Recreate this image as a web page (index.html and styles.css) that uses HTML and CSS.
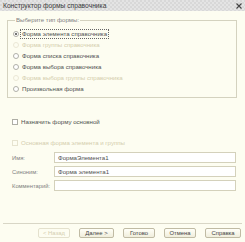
FILE: index.html
```html
<!DOCTYPE html>
<html lang="ru">
<head>
  <meta charset="UTF-8" />
  <title>Конструктор формы справочника</title>
  <link rel="stylesheet" href="styles.css">
</head>
<body>
  <div class="window">

    <div class="titlebar">
      <span class="title">Конструктор формы справочника</span>
      <svg class="close" width="6" height="6" viewBox="0 0 6 6">
        <path d="M0.5 0.5 L5.5 5.5 M5.5 0.5 L0.5 5.5" stroke="#444" stroke-width="1.1"/>
      </svg>
    </div>

    <div class="main">
      <fieldset class="group">
        <legend>Выберите тип формы:</legend>
        <label class="option"><span class="radio checked"></span><span class="text focus">Форма элемента справочника</span></label>
        <label class="option disabled"><span class="radio"></span><span class="text">Форма группы справочника</span></label>
        <label class="option"><span class="radio"></span><span class="text">Форма списка справочника</span></label>
        <label class="option"><span class="radio"></span><span class="text">Форма выбора справочника</span></label>
        <label class="option disabled"><span class="radio"></span><span class="text">Форма выбора группы справочника</span></label>
        <label class="option"><span class="radio"></span><span class="text">Произвольная форма</span></label>
      </fieldset>

      <label class="option check-main"><span class="box"></span><span class="text">Назначить форму основной</span></label>
      <label class="option check-group disabled"><span class="box"></span><span class="text">Основная форма элемента и группы</span></label>

      <div class="fields">
        <div class="field">
          <span class="field-label">Имя:</span>
          <div class="input">ФормаЭлемента1</div>
        </div>
        <div class="field">
          <span class="field-label">Синоним:</span>
          <div class="input">Форма элемента1</div>
        </div>
        <div class="field">
          <span class="field-label">Комментарий:</span>
          <div class="input"></div>
        </div>
      </div>
    </div>

    <div class="footer">
      <button class="btn w-back" disabled>&lt; Назад</button>
      <button class="btn w-next">Далее &gt;</button>
      <button class="btn w-done">Готово</button>
      <button class="btn w-cancel">Отмена</button>
      <button class="btn w-help">Справка</button>
    </div>

  </div>
</body>
</html>
```

FILE: styles.css
```css
/* Reset and base */
* { margin: 0; padding: 0; box-sizing: border-box; }
body {
  width: 245px;
  height: 242px;
  overflow: hidden;
  background: #fdfdf1;
  font-family: 'Liberation Sans', Arial, sans-serif;
  font-size: 6.1px;
  color: #505050;
}

.window {
  height: 242px;
  display: flex;
  flex-direction: column;
}

/* Title bar */
.titlebar {
  height: 11px;
  display: flex;
  align-items: center;
  justify-content: space-between;
  padding: 0 3px 0 3px;
  background-color: #d8d8d8;
  background-image:
    linear-gradient(45deg, #e4e4e4 25%, transparent 25%, transparent 75%, #e4e4e4 75%),
    linear-gradient(45deg, #e4e4e4 25%, transparent 25%, transparent 75%, #e4e4e4 75%);
  background-size: 4px 4px;
  background-position: 0 0, 2px 2px;
}
.title {
  font-size: 6.7px;
  color: #3a3a3a;
}

/* Main area */
.main {
  padding: 5px 8px 0 7px;
}

.group {
  border: 1px solid #d4d2bf;
  padding: 4px 0 3px 4px;
}
.group legend {
  line-height: 8px;
  margin-left: 3px;
  padding: 0 1px;
  color: #808080;
}

.option {
  display: flex;
  align-items: center;
  height: 11px;
  line-height: 11px;
  white-space: nowrap;
}
.option .text {
  line-height: 8px;
  padding: 0 1px;
  border: 1px solid transparent;
}
.option .text.focus {
  border: 1px dotted #666;
}
.option.disabled { color: #d4cdad; }

.radio {
  width: 6px;
  height: 6px;
  border: 1px solid #b0b0a8;
  border-radius: 50%;
  background: #fff;
  margin-right: 1px;
  margin-left: 1px;
  position: relative;
  flex-shrink: 0;
}
.radio.checked::after {
  content: "";
  position: absolute;
  width: 2px; height: 2px;
  top: 1px; left: 1px;
  border-radius: 50%;
  background: #444;
}
.option.disabled .radio {
  border-color: #ebe8d6;
  background: transparent;
}

.box {
  width: 6px;
  height: 6px;
  border: 1px solid #aeaea6;
  background: #fff;
  margin-left: 5px;
  margin-right: 1px;
  flex-shrink: 0;
}
.option.disabled .box {
  border-color: #e6e3cf;
  background: transparent;
}

.check-main { margin-top: 18px; }
.check-group { margin-top: 10px; }

/* Fields */
.fields {
  display: flex;
  flex-direction: column;
  gap: 3px;
  margin-top: 4px;
}
.field {
  display: flex;
  align-items: center;
  height: 11px;
}
.field-label {
  width: 47px;
  padding-left: 5px;
  font-size: 5.8px;
  color: #808080;
  white-space: nowrap;
}
.input {
  flex: 1;
  height: 11px;
  line-height: 9px;
  padding: 0 3px;
  background: #fff;
  border: 1px solid #d4d1bb;
  margin-right: 1px;
}

/* Footer */
.footer {
  margin-top: auto;
  margin-left: 3px;
  margin-right: 3px;
  border-top: 1px solid #d8d6c6;
  padding: 4px 1px 4px 0;
  display: flex;
  justify-content: flex-end;
  gap: 9px;
}
.btn {
  height: 10px;
  font-family: inherit;
  font-size: 5.9px;
  line-height: 8px;
  color: #444;
  background: linear-gradient(#fffff8, #f0eedc);
  border: 1px solid #c0bba4;
  border-radius: 2px;
}
.btn:disabled {
  color: #d4ceb0;
  border-color: #e4e1cd;
  background: #fdfdf1;
}
.w-back { width: 32px; }
.w-next { width: 35px; }
.w-done { width: 32px; }
.w-cancel { width: 32px; }
.w-help { width: 36px; }
```
